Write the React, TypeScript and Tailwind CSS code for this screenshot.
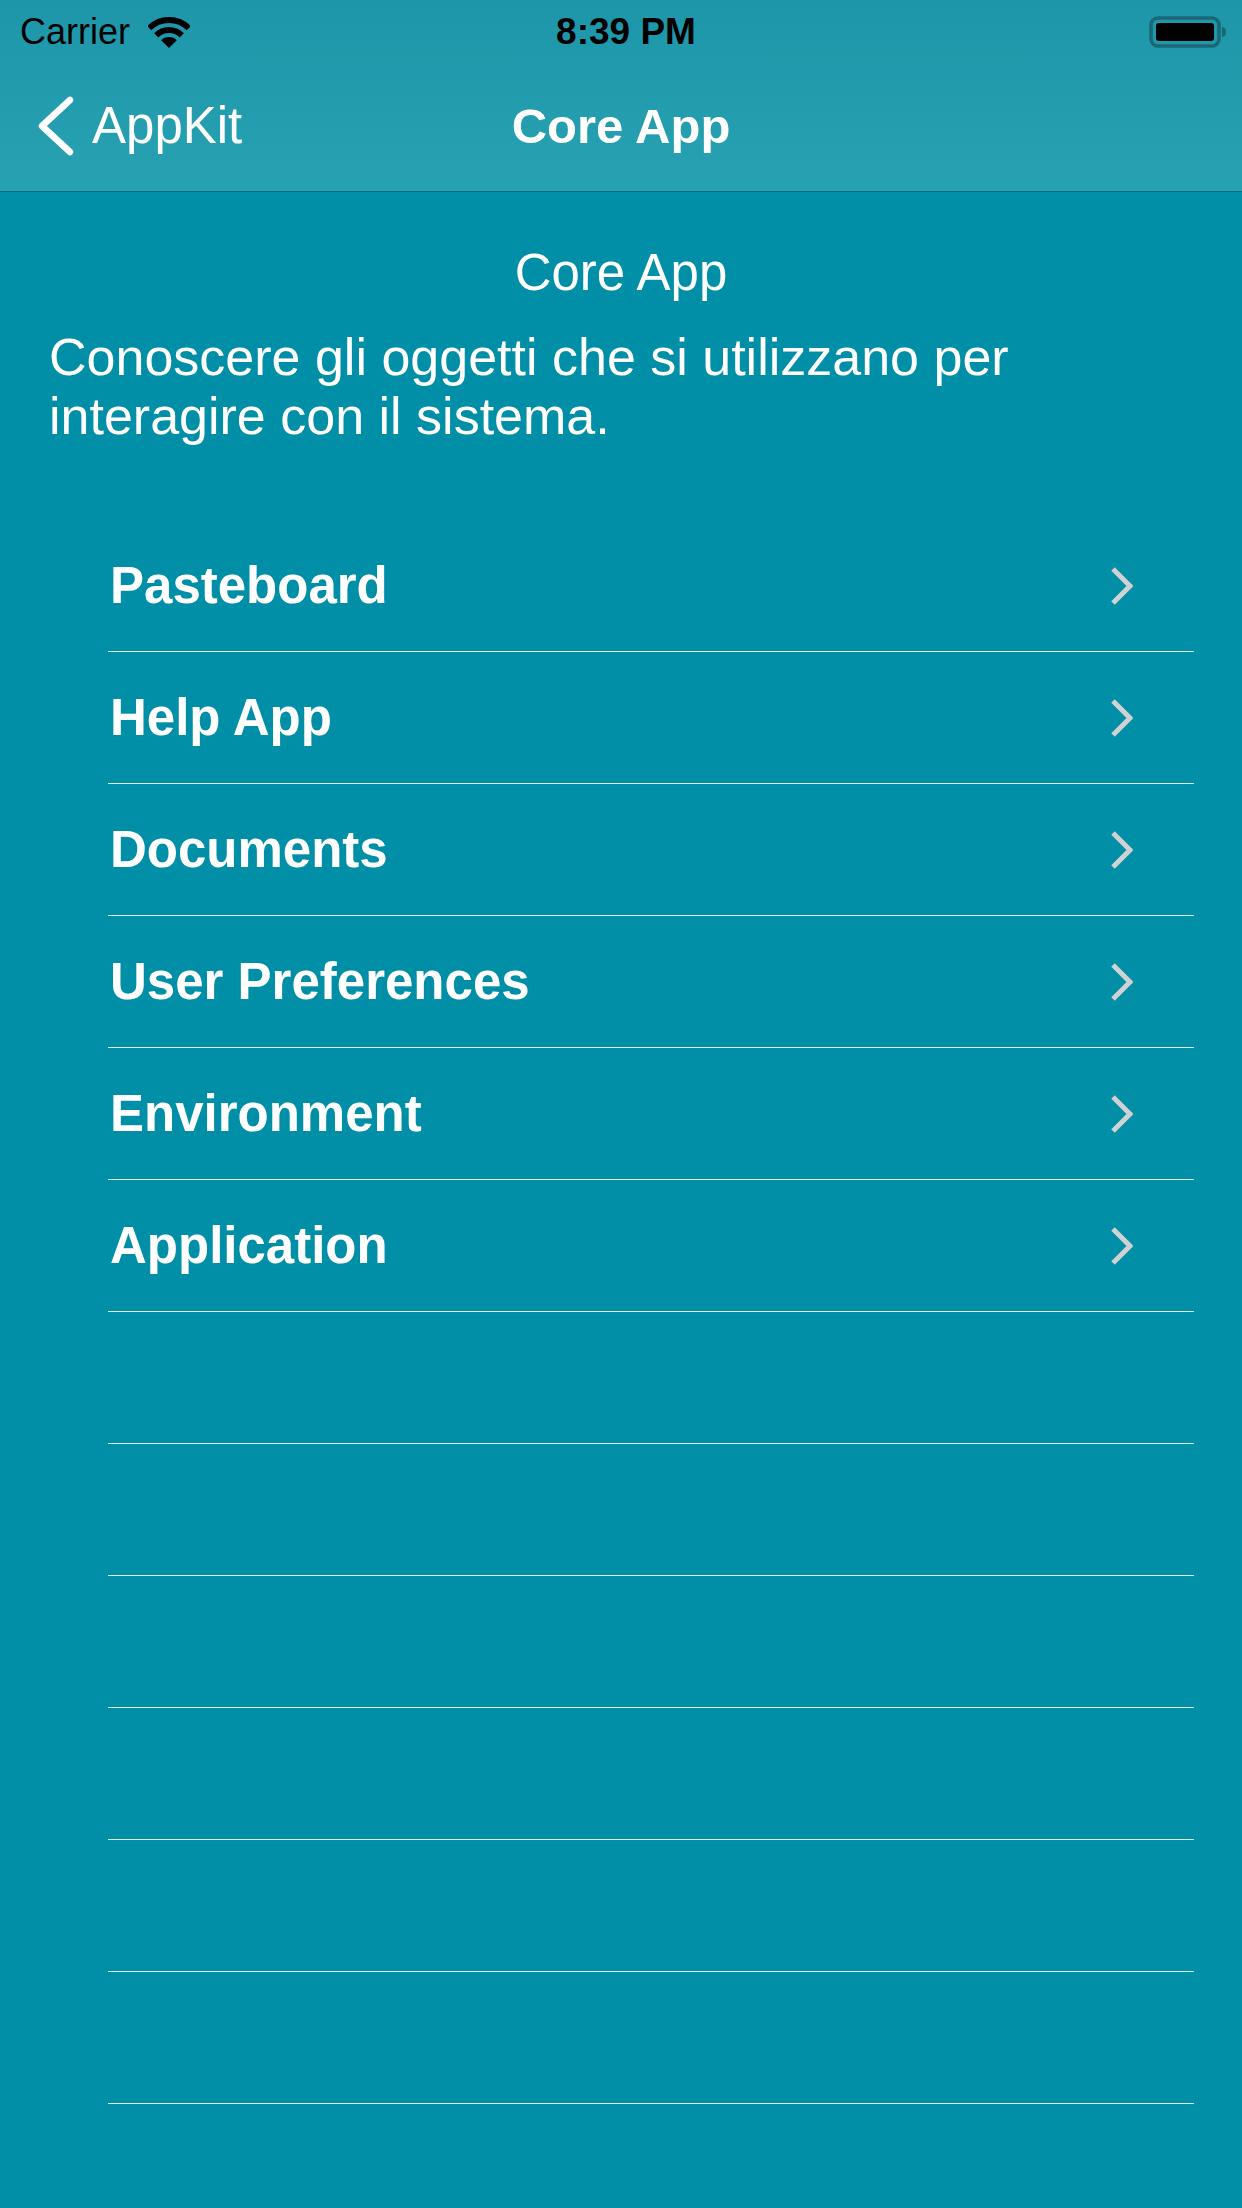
import React from "react";

const items = [
  "Pasteboard",
  "Help App",
  "Documents",
  "User Preferences",
  "Environment",
  "Application",
  "",
  "",
  "",
  "",
  "",
  "",
];

function Wifi() {
  return (
    <svg width="42" height="31" viewBox="0 0 42 31" className="mt-[1px]">
      <path d="M1.2 11.2 A28 28 0 0 1 40.8 11.2" fill="none" stroke="#000" strokeWidth="6" />
      <path d="M8.27 18.27 A18 18 0 0 1 33.73 18.27" fill="none" stroke="#000" strokeWidth="6" />
      <path d="M21 31 L13.2 23.2 A11 11 0 0 1 28.8 23.2 Z" fill="#000" />
    </svg>
  );
}

function Battery() {
  return (
    <svg width="78" height="32" viewBox="0 0 78 32">
      <rect x="2" y="2" width="68" height="28" rx="7" fill="none" stroke="#1a6776" strokeWidth="3.5" />
      <rect x="7" y="7" width="58" height="18" rx="3" fill="#000" />
      <path d="M73 11 Q77 11 77 16 Q77 21 73 21 Z" fill="#1a6776" />
    </svg>
  );
}

function Chevron() {
  return (
    <svg width="22" height="38" viewBox="0 0 22 38">
      <polyline points="2,2 19,19 2,36" fill="none" stroke="#cfd1d4" strokeWidth="5" />
    </svg>
  );
}

export default function App() {
  return (
    <div className="w-[1242px] h-[2208px] overflow-hidden bg-[#008fa6] text-white font-['Liberation_Sans',Arial,sans-serif]">
      <header className="h-[192px] border-b border-[#0a6e7f] bg-linear-to-b from-[#1e96a9] to-[#28a1b3]">
        <div className="h-[60px] pt-[3px] grid grid-cols-[1fr_auto_1fr] items-center text-black">
          <div className="flex items-center gap-[18px] pl-[20px]">
            <span className="text-[36px] leading-[57px]">Carrier</span>
            <Wifi />
          </div>
          <span className="text-[37px] leading-[57px] font-bold pl-[10px]">8:39 PM</span>
          <div className="flex justify-end pr-[15px]">
            <Battery />
          </div>
        </div>
        <div className="h-[131px] grid grid-cols-[1fr_auto_1fr] items-center">
          <div className="flex items-center pl-[38px] gap-[18px]">
            <svg width="36" height="60" viewBox="0 0 36 60">
              <polyline
                points="32,4 4,30 32,56"
                fill="none"
                stroke="#fff"
                strokeWidth="6.5"
                strokeLinecap="round"
                strokeLinejoin="round"
              />
            </svg>
            <span className="text-[51px] leading-[60px]">AppKit</span>
          </div>
          <span className="text-[49px] leading-[60px] font-bold">Core App</span>
          <div />
        </div>
      </header>

      <main className="px-[49px] pt-[51px]">
        <h1 className="text-center text-[51px] leading-[60px]">Core App</h1>
        <p className="mt-[25px] text-[52px] leading-[59px]">
          Conoscere gli oggetti che si utilizzano per interagire con il sistema.
        </p>
      </main>

      <ul className="mt-[74px] ml-[108px] mr-[48px]">
        {items.map((label, i) => (
          <li
            key={i}
            className="h-[132px] border-b border-[#e4f2f4] flex items-center justify-between pl-[2px] pr-[61px]"
          >
            <span className="text-[51px] leading-[60px] font-bold">{label}</span>
            {label && <Chevron />}
          </li>
        ))}
      </ul>
    </div>
  );
}
